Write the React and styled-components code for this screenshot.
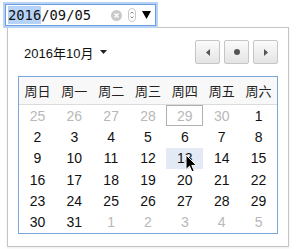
import styled, { createGlobalStyle } from "styled-components";

const GlobalStyle = createGlobalStyle`
  body {
    margin: 0;
    background: #fff;
    font-family: "Liberation Sans", "Noto Sans CJK SC", sans-serif;
  }
`;

const Page = styled.div`
  padding: 4px 0 0 5px;
  width: 297px;
  height: 249px;
  box-sizing: border-box;
  position: relative;
`;

const DateInput = styled.div`
  position: relative;
  z-index: 1;
  box-sizing: border-box;
  width: 151px;
  height: 22px;
  border: 1px solid #6c9edf;
  box-shadow: 0 0 0 2px #b9d3f4;
  background: #fff;
  display: flex;
  align-items: center;
  padding: 0 4px 0 2px;
  font-family: "DejaVu Sans Mono", "Liberation Mono", monospace;
  font-size: 13.8px;
  color: #111;
`;

const Selected = styled.span`
  background: #b5d3f8;
  line-height: 18px;
`;

const Icons = styled.div`
  margin-left: auto;
  display: flex;
  align-items: center;
  gap: 6px;
`;

const Popup = styled.div`
  box-sizing: border-box;
  margin: 1px 0 0 2px;
  width: 282px;
  height: 220px;
  border: 1px solid #c4c4c4;
  box-shadow: 0 1px 2px rgba(0, 0, 0, 0.08);
  padding: 12px 10px 0 10px;
  background: #fff;
`;

const Header = styled.div`
  display: flex;
  align-items: center;
  height: 24px;
  padding-left: 6px;
  margin-bottom: 12px;
`;

const Title = styled.div`
  font-size: 13px;
  color: #111;
  display: flex;
  align-items: center;
  gap: 7px;
`;

const Nav = styled.div`
  margin-left: auto;
  display: flex;
  gap: 4px;
`;

const NavButton = styled.div`
  box-sizing: border-box;
  width: 25px;
  height: 24px;
  border: 1px solid #c6c6c6;
  border-radius: 2px;
  background: linear-gradient(#fbfbfb, #e4e4e4);
  display: flex;
  align-items: center;
  justify-content: center;
`;

const Table = styled.div`
  box-sizing: border-box;
  width: 260px;
  height: 158px;
  border: 1px solid #7aa6dc;
  display: flex;
  flex-direction: column;
`;

const WeekRow = styled.div`
  display: grid;
  grid-template-columns: repeat(7, 1fr);
  height: 27px;
  border-bottom: 1px solid #dcdcdc;
  background: #f8f8f8;
`;

const WeekDay = styled.div`
  display: flex;
  align-items: center;
  justify-content: center;
  font-size: 13px;
  color: #222;
`;

const Days = styled.div`
  flex: 1;
  display: grid;
  grid-template-columns: repeat(7, 1fr);
  grid-template-rows: repeat(6, 1fr);
`;

const Day = styled.div`
  box-sizing: border-box;
  display: flex;
  align-items: center;
  justify-content: center;
  font-size: 14px;
  color: ${(p) => (p.$muted ? "#b8b8b8" : "#111")};
  border: 1px solid ${(p) => (p.$today ? "#b0b0b0" : "transparent")};
  background: ${(p) => (p.$hover ? "#e3eaf6" : "transparent")};
`;

const Cursor = styled.svg`
  position: absolute;
  left: 185px;
  top: 154px;
`;

const weekdays = ["周日", "周一", "周二", "周三", "周四", "周五", "周六"];

const days = [];
[25, 26, 27, 28, 29, 30].forEach((d) => days.push({ d, muted: true }));
for (let d = 1; d <= 31; d++) days.push({ d });
for (let d = 1; d <= 5; d++) days.push({ d, muted: true });

function App() {
  return (
    <Page>
      <GlobalStyle />
      <DateInput>
        <Selected>2016</Selected>/09/05
        <Icons>
          <svg width="11" height="11" viewBox="0 0 11 11">
            <circle cx="5.5" cy="5.5" r="5.5" fill="#c9c9c9" />
            <path d="M3.5 3.5l4 4M7.5 3.5l-4 4" stroke="#fff" strokeWidth="1.4" />
          </svg>
          <svg width="8" height="14" viewBox="0 0 8 14">
            <rect x="0.5" y="0.5" width="7" height="13" rx="3.5" fill="#fff" stroke="#c8c8c8" />
            <path d="M2.5 5.5L4 4l1.5 1.5M2.5 8.5L4 10l1.5-1.5" stroke="#777" fill="none" strokeWidth="0.9" />
          </svg>
          <svg width="9" height="8" viewBox="0 0 9 8">
            <path d="M0 0h9L4.5 8z" fill="#000" />
          </svg>
        </Icons>
      </DateInput>
      <Popup>
        <Header>
          <Title>
            2016年10月
            <svg width="7" height="4" viewBox="0 0 7 4">
              <path d="M0 0h7L3.5 4z" fill="#222" />
            </svg>
          </Title>
          <Nav>
            <NavButton>
              <svg width="4" height="7" viewBox="0 0 4 7">
                <path d="M4 0v7L0 3.5z" fill="#555" />
              </svg>
            </NavButton>
            <NavButton>
              <svg width="6" height="6" viewBox="0 0 6 6">
                <circle cx="3" cy="3" r="3" fill="#555" />
              </svg>
            </NavButton>
            <NavButton>
              <svg width="4" height="7" viewBox="0 0 4 7">
                <path d="M0 0v7L4 3.5z" fill="#555" />
              </svg>
            </NavButton>
          </Nav>
        </Header>
        <Table>
          <WeekRow>
            {weekdays.map((w) => (
              <WeekDay key={w}>{w}</WeekDay>
            ))}
          </WeekRow>
          <Days>
            {days.map((x, i) => (
              <Day key={i} $muted={x.muted} $today={i === 4} $hover={i === 18}>
                {x.d}
              </Day>
            ))}
          </Days>
        </Table>
      </Popup>
      <Cursor width="12" height="19" viewBox="0 0 12 19">
        <path d="M1 1v14.5l3.5-3.3 2.4 5.6 2.3-1-2.4-5.4H11.5z" fill="#000" stroke="#fff" strokeWidth="1" strokeLinejoin="round" />
      </Cursor>
    </Page>
  );
}

export default App;
